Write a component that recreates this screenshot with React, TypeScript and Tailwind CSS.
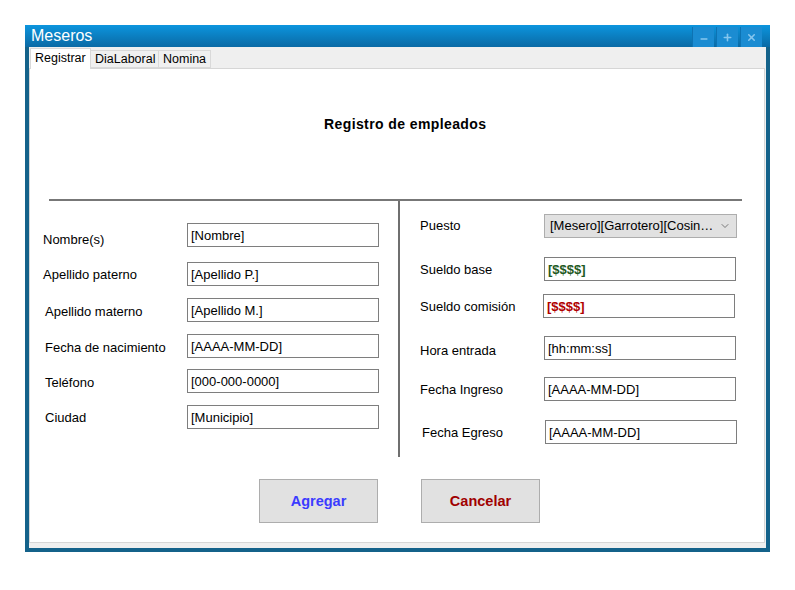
import { Minus, Plus, X, ChevronDown } from "lucide-react"

const font = { fontFamily: '"Liberation Sans", Arial, sans-serif' }

const Field = ({ text, className = "" }: { text: string, className?: string }) => (
  <div className={`h-[24px] w-[192px] shrink-0 flex items-center border border-[#7e7e7e] bg-white pl-[3px] text-[13px] leading-[15px] ${className}`}>
    {text}
  </div>
)

const leftRows = [
  { label: "Nombre(s)", value: "[Nombre]", ml: "ml-[13px] w-[144px]", mt: "mt-[22px]", shift: "mt-[10px]" },
  { label: "Apellido paterno", value: "[Apellido P.]", ml: "ml-[13px] w-[144px]", mt: "mt-[15px]", shift: "mt-[2px]" },
  { label: "Apellido materno", value: "[Apellido M.]", ml: "ml-[15px] w-[142px]", mt: "mt-[12px]", shift: "mt-[4px]" },
  { label: "Fecha de nacimiento", value: "[AAAA-MM-DD]", ml: "ml-[15px] w-[142px]", mt: "mt-[12px]", shift: "mt-[4px]" },
  { label: "Teléfono", value: "[000-000-0000]", ml: "ml-[15px] w-[142px]", mt: "mt-[11px]", shift: "mt-[4px]" },
  { label: "Ciudad", value: "[Municipio]", ml: "ml-[15px] w-[142px]", mt: "mt-[12px]", shift: "mt-[2px]" },
]

const TitleButton = ({ children }: { children: React.ReactNode }) => (
  <div className="w-[22px] h-[20px] mt-[2px] flex items-center justify-center bg-[#1b8cd2] border-l border-[#0d73b3] text-[#86c6ee]">
    {children}
  </div>
)

export default function App() {
  return (
    <div className="w-[795px] h-[590px] bg-white pt-[25px] pl-[25px]" style={font}>
      <div className="w-[745px] h-[527px] bg-[#14628a] px-[4px] pb-[4px] flex flex-col">
        {/* title bar */}
        <div className="h-[22px] -mx-[4px] pl-[6px] pr-[8px] flex bg-gradient-to-b from-[#0c95de] to-[#0a6aa5]">
          <div className="flex-1 text-white text-[16px] leading-[22px]">Meseros</div>
          <div className="flex gap-[2px]">
            <TitleButton><Minus size={10} strokeWidth={3.5} className="mt-[4px]" /></TitleButton>
            <TitleButton><Plus size={11} strokeWidth={3.5} /></TitleButton>
            <TitleButton><X size={11} strokeWidth={3.5} /></TitleButton>
          </div>
        </div>

        <div className="flex-1 bg-[#efefef] flex flex-col">
          {/* tabs */}
          <div className="h-[21px] flex items-end pl-px text-[12.5px] text-black">
            <div className="h-[21px] w-[61px] bg-white border border-b-0 border-[#d9d9d9] pl-[4px] leading-[18px] relative z-10 -mb-px">Registrar</div>
            <div className="h-[18px] w-[68px] bg-[#f0f0f0] border border-l-0 border-[#d9d9d9] pl-[4px] leading-[17px]">DiaLaboral</div>
            <div className="h-[18px] w-[52px] bg-[#f0f0f0] border border-l-0 border-[#d9d9d9] pl-[4px] leading-[17px]">Nomina</div>
          </div>

          {/* panel */}
          <div className="h-[475px] w-[736px] bg-white border border-[#d6d6d6] flex flex-col text-[13px] leading-[14px] text-black">
            <div className="mt-[47px] ml-[294px] text-[14px] leading-[16px] font-bold tracking-[0.4px]">Registro de empleados</div>
            <div className="mt-[67px] ml-[19px] w-[693px] h-[2px] bg-[#777777]" />

            <div className="flex">
              <div className="w-[370px] h-[256px] border-r-2 border-[#6f6f6f] flex flex-col">
                {leftRows.map((r) => (
                  <div key={r.label} className={`flex items-center h-[24px] ${r.mt}`}>
                    <div className={`${r.ml} ${r.shift} shrink-0`}>{r.label}</div>
                    <Field text={r.value} />
                  </div>
                ))}
              </div>

              <div className="flex flex-col">
                <div className="flex items-center h-[24px] mt-[13px]">
                  <div className="ml-[20px] w-[124px] shrink-0">Puesto</div>
                  <div className="h-[24px] w-[193px] flex items-center bg-[#e1e1e1] border border-[#adadad] pl-[5px] pr-[5px] text-[13px]">
                    <span className="flex-1 min-w-0 truncate">[Mesero][Garrotero][Cosinero]</span>
                    <ChevronDown size={12} strokeWidth={1.5} className="ml-[5px] shrink-0 text-[#555]" />
                  </div>
                </div>
                <div className="flex items-center h-[24px] mt-[19px]">
                  <div className="ml-[20px] w-[124px] shrink-0 mt-[2px]">Sueldo base</div>
                  <Field text="[$$$$]" className="font-bold text-[#1f5a1f]" />
                </div>
                <div className="flex items-center h-[24px] mt-[13px]">
                  <div className="ml-[20px] w-[123px] shrink-0 mt-[2px]">Sueldo comisión</div>
                  <Field text="[$$$$]" className="font-bold text-[#b00000]" />
                </div>
                <div className="flex items-center h-[24px] mt-[18px]">
                  <div className="ml-[20px] w-[124px] shrink-0 mt-[6px]">Hora entrada</div>
                  <Field text="[hh:mm:ss]" />
                </div>
                <div className="flex items-center h-[24px] mt-[17px]">
                  <div className="ml-[20px] w-[124px] shrink-0 mt-[2px]">Fecha Ingreso</div>
                  <Field text="[AAAA-MM-DD]" />
                </div>
                <div className="flex items-center h-[24px] mt-[19px]">
                  <div className="ml-[22px] w-[123px] shrink-0 mt-[2px]">Fecha Egreso</div>
                  <Field text="[AAAA-MM-DD]" />
                </div>
              </div>
            </div>

            <div className="flex mt-[22px] ml-[229px] gap-[43px] text-[14.5px] font-bold">
              <button className="w-[119px] h-[44px] bg-[#e1e1e1] border border-[#adadad] text-[#3b3bff]">Agregar</button>
              <button className="w-[119px] h-[44px] bg-[#e1e1e1] border border-[#adadad] text-[#a00000]">Cancelar</button>
            </div>
          </div>
        </div>
      </div>
    </div>
  )
}
